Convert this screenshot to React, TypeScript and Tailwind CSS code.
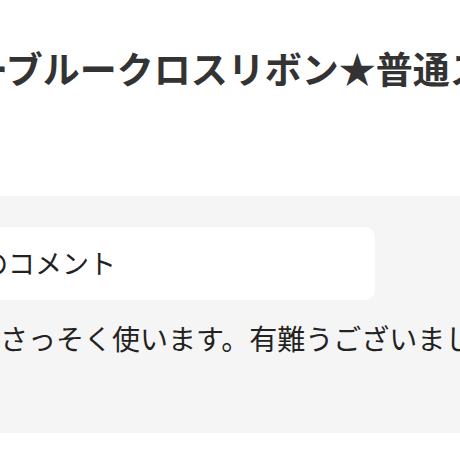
export default function App() {
  return (
    <div
      className="h-[460px] w-[460px] overflow-hidden bg-white text-[#333]"
      style={{ fontFamily: '"Noto Sans CJK JP", "Noto Sans", sans-serif' }}
    >
      <div className="pt-[47px]">
        <h1 className="ml-[-29px] whitespace-nowrap text-[37px] font-bold leading-[42px] text-[#333]">
          ーブルークロスリボン★普通ステッチ
        </h1>
      </div>
      <section className="mt-[107px] h-[237px] bg-[#f5f5f5] pt-[31px]">
        <div className="ml-[-20px] flex h-[73px] w-[395px] items-center rounded-[10px] bg-white">
          <p className="ml-[1px] whitespace-nowrap text-[27px] text-[#222]">のコメント</p>
        </div>
        <p className="mt-[20px] whitespace-nowrap text-[28px] leading-[36px] text-[#222]">
          さっそく使います。有難うございました。
        </p>
      </section>
    </div>
  )
}
